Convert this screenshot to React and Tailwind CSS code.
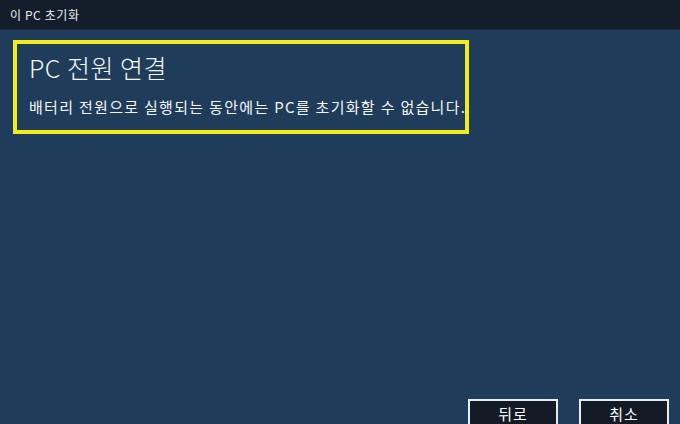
export default function App() {
  const font = { fontFamily: '"Noto Sans CJK KR", "Noto Sans", sans-serif' };
  return (
    <div className="w-[680px] h-[424px] overflow-hidden flex flex-col bg-[#1f3c5b] text-white" style={font}>
      <div className="h-[30px] shrink-0 bg-[#141e2b] flex items-center pl-[10px] text-[12px] tracking-[0.6px] text-[#e8ecf0] border-b border-[#1a2636]">
        이 PC 초기화
      </div>
      <div className="flex-1 min-h-0 pt-[10px] pl-[13px]">
        <div className="w-[456px] h-[94px] border-[4px] border-[#f2ec1e] pl-[12px] pt-[7px]">
          <div className="text-[25px] leading-[32px] font-light tracking-[0.5px] text-[#f4f6f8]">PC 전원 연결</div>
          <div className="mt-[14px] text-[15px] leading-[20px] tracking-[1.3px] text-[#f4f6f8] whitespace-nowrap">
            배터리 전원으로 실행되는 동안에는 PC를 초기화할 수 없습니다.
          </div>
        </div>
      </div>
      <div className="h-[25px] shrink-0 flex justify-end gap-[21px] pr-[11px]">
        <button className="w-[90px] h-[32px] shrink-0 border-2 border-[#e9ecef] bg-[#131b27] text-[15px] tracking-[1px] text-white flex justify-center pt-[2px]">
          뒤로
        </button>
        <button className="w-[90px] h-[32px] shrink-0 border-2 border-[#e9ecef] bg-[#131b27] text-[15px] tracking-[1px] text-white flex justify-center pt-[2px]">
          취소
        </button>
      </div>
    </div>
  );
}
